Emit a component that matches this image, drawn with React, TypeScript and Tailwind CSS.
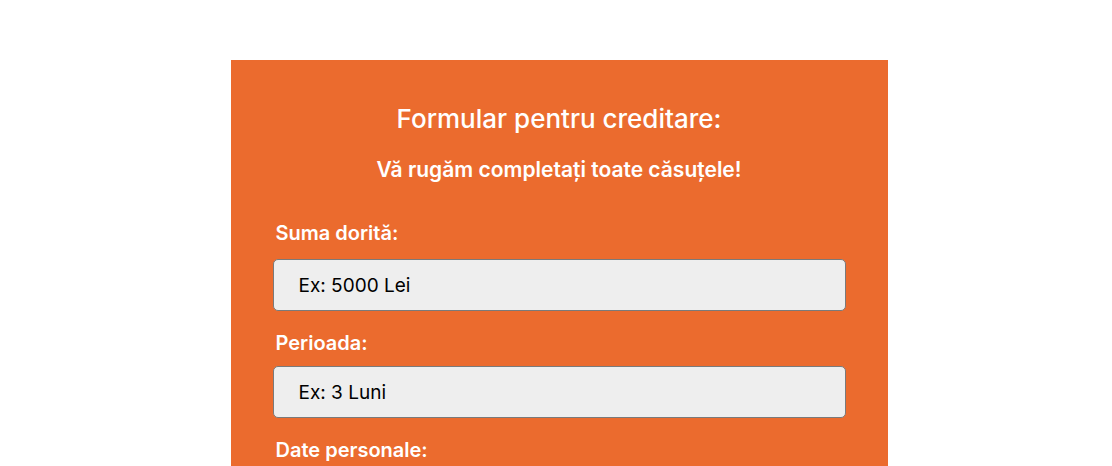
export default function App() {
  return (
    <div className="min-h-screen bg-white flex justify-center pt-[60px] font-['Inter',sans-serif]">
      <div className="ml-[6px] w-[657px] bg-[#eb6b2e] px-[42px] pt-[42px] pb-10 text-white">
        <h1 className="text-center text-[26px] font-medium leading-[34px]">Formular pentru creditare:</h1>
        <h2 className="text-center text-[21px] font-semibold leading-[27px] mt-[20px]">
          Vă rugăm completați toate căsuțele!
        </h2>
        <form className="mt-[37px] flex flex-col">
          <label className="pl-[3px] text-[20px] font-semibold leading-[27px]">Suma dorită:</label>
          <input
            type="text"
            placeholder="Ex: 5000 Lei"
            className="mt-[12px] h-[52px] w-full rounded-[5px] border border-[#7a7a7a] bg-[#eeeeee] px-[25px] text-[19px] text-black placeholder:text-black outline-none"
          />
          <label className="mt-[19px] pl-[3px] text-[20px] font-semibold leading-[27px]">Perioada:</label>
          <input
            type="text"
            placeholder="Ex: 3 Luni"
            className="mt-[9px] h-[52px] w-full rounded-[5px] border border-[#7a7a7a] bg-[#eeeeee] px-[25px] text-[19px] text-black placeholder:text-black outline-none"
          />
          <label className="mt-[19px] pl-[3px] text-[20px] font-semibold leading-[27px]">Date personale:</label>
        </form>
      </div>
    </div>
  );
}
